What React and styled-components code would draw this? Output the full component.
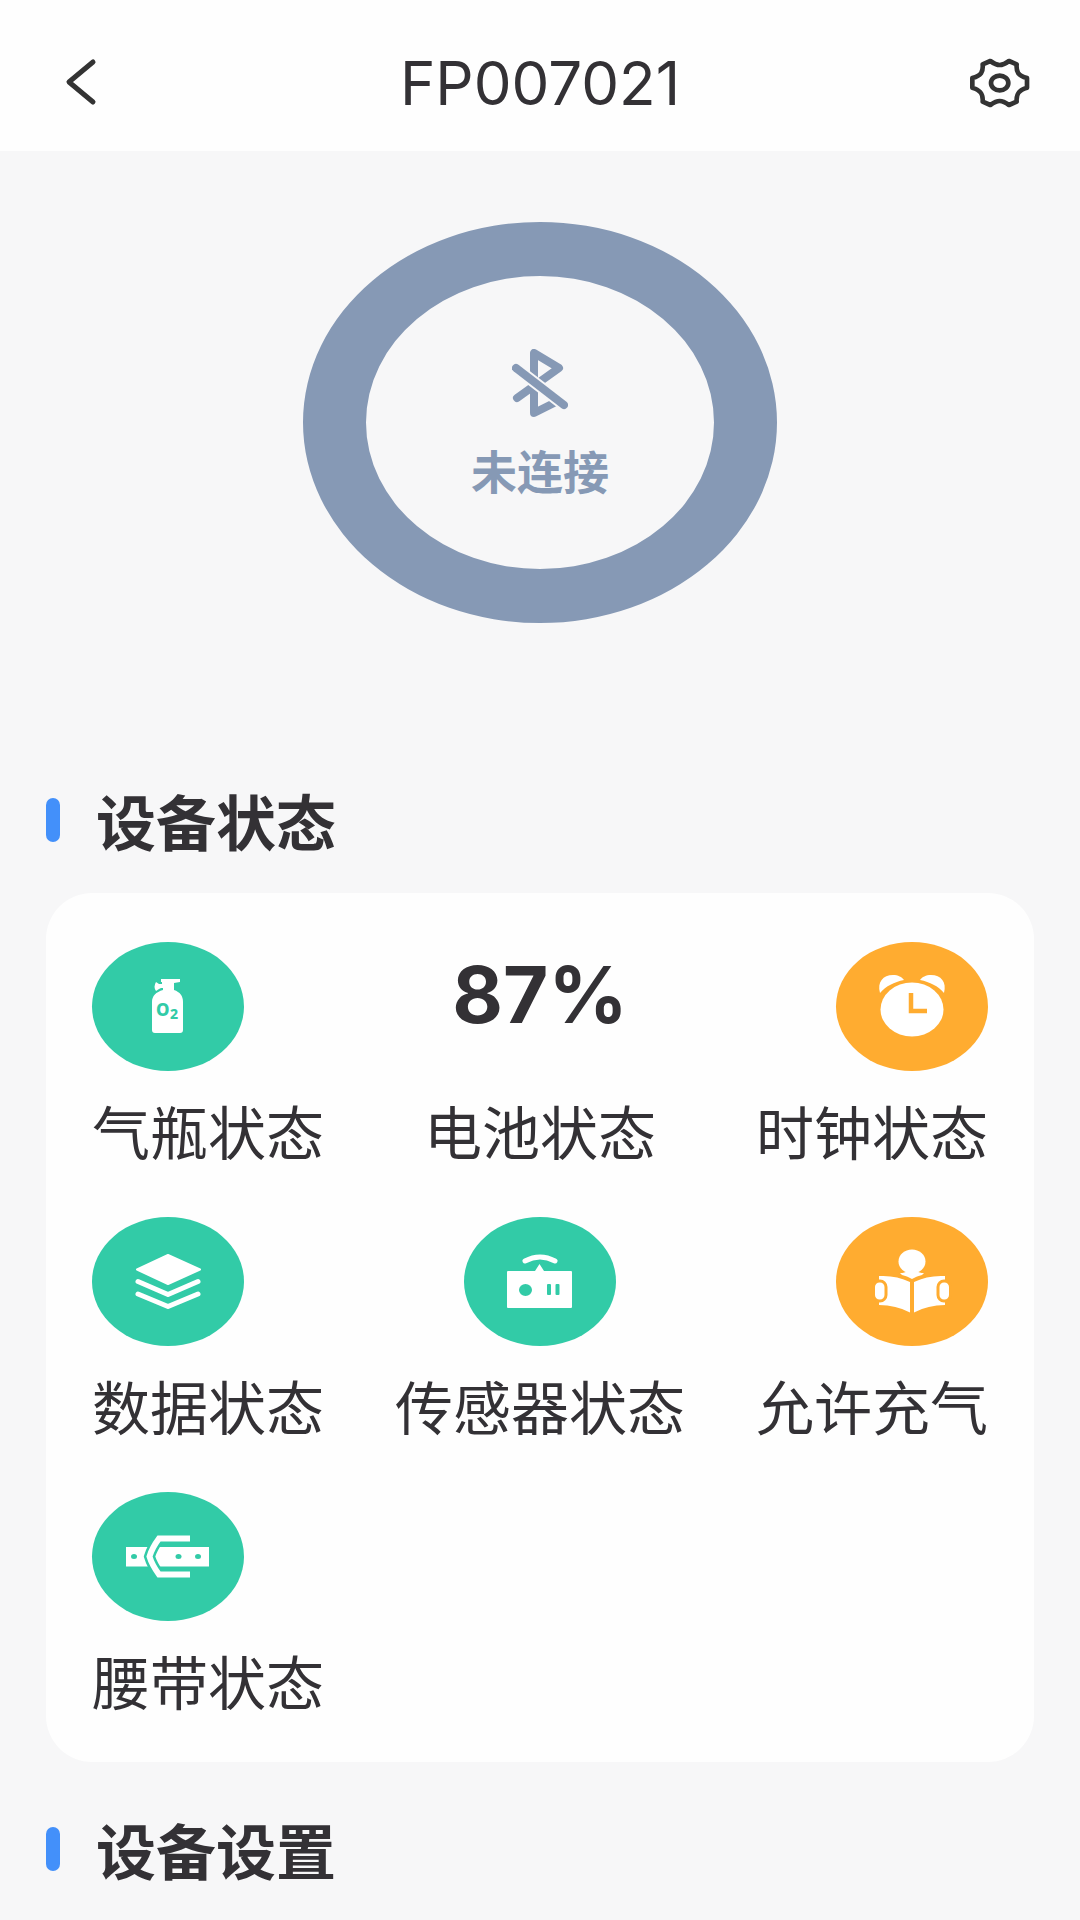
import React from "react";
import styled, { createGlobalStyle } from "styled-components";

const GlobalStyle = createGlobalStyle`
  * {
    box-sizing: border-box;
  }
  body {
    margin: 0;
    background: #f7f7f8;
    color: #333135;
    font-family: "Noto Sans", "Noto Sans CJK SC", sans-serif;
  }
`;

export default function App() {
  return (
    <>
      <GlobalStyle />
      <Header title="FP007021" />
      <Main>
        <Ring>
          <BluetoothOffIcon />
          <RingText>未连接</RingText>
        </Ring>
        <SectionTitle>设备状态</SectionTitle>
        <StatusCard>
          <Status label="气瓶状态" color="green" icon={<TankIcon />} />
          <Status label="电池状态" value="87%" />
          <Status label="时钟状态" color="orange" icon={<ClockIcon />} />
          <Status label="数据状态" color="green" icon={<LayersIcon />} />
          <Status label="传感器状态" color="green" icon={<SensorIcon />} />
          <Status label="允许充气" color="orange" icon={<ReaderIcon />} />
          <Status label="腰带状态" color="green" icon={<BeltIcon />} />
        </StatusCard>
        <SectionTitle>设备设置</SectionTitle>
      </Main>
    </>
  );
}

function Header({ title }) {
  return (
    <HeaderWrapper>
      <IconButton type="button" aria-label="返回">
        <svg width="66" height="54" viewBox="0 0 66 54" fill="none">
          <path
            d="M43 6L19 26L43 46"
            stroke="#333"
            strokeWidth="5"
            strokeLinecap="round"
            strokeLinejoin="round"
          />
        </svg>
      </IconButton>
      <h1>{title}</h1>
      <IconButton type="button" aria-label="设置">
        <svg width="66" height="54" viewBox="42 46 198 162" fill="none">
          <g stroke="#333" strokeWidth="14" strokeLinejoin="round">
            <path d="M121 61C132 69 138 73 149 73C160 73 166 69 177 61L200 71C198 94 204 104 231 112V141C206 148 198 160 200 183L177 193C166 185 160 181 149 181C138 181 132 185 121 193L98 183C100 160 92 148 67 141V112C94 104 100 94 98 71Z" />
            <ellipse cx="149" cy="127" rx="26" ry="22" />
          </g>
        </svg>
      </IconButton>
    </HeaderWrapper>
  );
}

const HeaderWrapper = styled.header`
  display: grid;
  grid-template-columns: 66px 1fr 66px;
  align-items: center;
  height: 151px;
  padding: 14px 50px 0;
  background: #fefefe;

  h1 {
    margin: 0;
    font-family: Inter, "Noto Sans", sans-serif;
    font-size: 60px;
    line-height: 70px;
    font-weight: 400;
    text-align: center;
  }
`;

const IconButton = styled.button`
  display: flex;
  padding: 0;
  border: 0;
  background: none;
  cursor: pointer;
`;

const Main = styled.main`
  display: flex;
  flex-direction: column;
  padding: 71px 46px 40px;
`;

const Ring = styled.div`
  display: flex;
  flex-direction: column;
  align-items: center;
  align-self: center;
  gap: 29px;
  width: 474px;
  height: 401px;
  margin-bottom: 170px;
  padding-top: 73px;
  border: solid #8699b5;
  border-width: 54px 63px;
  border-radius: 50%;
  color: #8699b5;
`;

const RingText = styled.span`
  font-size: 46px;
  line-height: 50px;
  font-weight: 700;
`;

const SectionTitle = styled.h2`
  display: flex;
  align-items: center;
  gap: 36px;
  margin: 0;
  font-size: 60px;
  line-height: 60px;
  font-weight: 700;

  &::before {
    content: "";
    width: 14px;
    height: 44px;
    margin-bottom: 6px;
    border-radius: 7px;
    background: #4390fa;
  }
`;

const StatusCard = styled.ul`
  display: grid;
  grid-template-columns: repeat(3, 1fr);
  row-gap: 49px;
  margin: 40px 0 60px;
  padding: 49px 46px 44px;
  border-radius: 46px;
  background: #fefefe;
  list-style: none;
`;

function Status({ label, value, color, icon }) {
  return (
    <StatusWrapper>
      {icon ? <Badge $color={color}>{icon}</Badge> : <Value>{value}</Value>}
      <span>{label}</span>
    </StatusWrapper>
  );
}

const StatusWrapper = styled.li`
  display: flex;
  flex-direction: column;
  align-items: center;
  gap: 27px;
  font-size: 58px;
  line-height: 70px;
  white-space: nowrap;

  &:nth-child(3n + 1) {
    align-items: flex-start;
  }
  &:nth-child(3n) {
    align-items: flex-end;
  }
`;

const badgeColors = {
  green: "#32cba7",
  orange: "#ffac30",
};

const Badge = styled.div`
  width: 152px;
  height: 129px;
  border-radius: 50%;
  color: ${({ $color }) => badgeColors[$color]};
  background: currentColor;

  svg {
    display: block;
  }
`;

const Value = styled.strong`
  height: 129px;
  font-family: Inter, "Noto Sans", sans-serif;
  font-size: 78px;
  line-height: 106px;
  font-weight: 700;
`;

function BadgeIcon({ children }) {
  return (
    <svg width="152" height="129" viewBox="0 0 152 129" fill="#fff" aria-hidden="true">
      {children}
    </svg>
  );
}

function TankIcon() {
  return (
    <BadgeIcon>
      <path d="M69 37H88V40L82 41V48C88 50 91 54 91 60V88Q91 91 88 91H63Q60 91 60 88V60C60 54 64 50 71 48V46H69L67 47L64 49Q61 45 64 40L67 42H70V40H69Z" />
      <g fill="currentColor" fontWeight="800">
        <text x="64" y="74" fontSize="17">O</text>
        <text x="78" y="77" fontSize="14">2</text>
      </g>
    </BadgeIcon>
  );
}

function ClockIcon() {
  return (
    <BadgeIcon>
      <path d="M44 51C41 40 47 33 57 33C62 33 66 35 68 38C58 40 50 44 44 51Z" />
      <path d="M108 51C111 40 105 33 95 33C90 33 86 35 84 38C94 40 102 44 108 51Z" />
      <ellipse cx="76" cy="67.500" rx="31.500" ry="27" />
      <path d="M75 51V69H91" fill="none" stroke="currentColor" strokeWidth="4.500" />
    </BadgeIcon>
  );
}

function LayersIcon() {
  return (
    <BadgeIcon>
      <g stroke="#fff" strokeLinecap="round" strokeLinejoin="round">
        <path d="M76 38L108 52.500L76 67L45 52.500Z" strokeWidth="2" />
        <path d="M46 64.500L76 77.500L106 64.500M46 77L76 89.500L106 77" fill="none" strokeWidth="5" />
      </g>
    </BadgeIcon>
  );
}

function SensorIcon() {
  return (
    <BadgeIcon>
      <path d="M44 54H71L75.500 47L80 54H107Q108 54 108 55V90Q108 91 107 91H44Q43 91 43 90V55Q43 54 44 54Z" />
      <path d="M61 44Q76 36 91 44" fill="none" stroke="#fff" strokeWidth="5" strokeLinecap="round" />
      <g fill="currentColor">
        <ellipse cx="61.500" cy="73" rx="6.500" ry="6" />
        <rect x="83" y="67" width="4" height="11" rx="1" />
        <rect x="91.500" y="67" width="4" height="11" rx="1" />
      </g>
    </BadgeIcon>
  );
}

function ReaderIcon() {
  return (
    <BadgeIcon>
      <ellipse cx="76" cy="44.500" rx="13.500" ry="12" />
      <path d="M71 54H81Q83 56 88 56L86 58Q81 59 76 62Q71 59 66 58L64 56Q69 56 71 54Z" />
      <path d="M43 59Q60 58 74 65V95.500Q60 88 43 88Z" />
      <path d="M109 59Q92 58 78 65V95.500Q92 88 109 88Z" />
      <g stroke="currentColor" strokeWidth="3">
        <rect x="37.500" y="64" width="12.500" height="20" rx="6" />
        <rect x="102" y="64" width="12.500" height="20" rx="6" />
      </g>
    </BadgeIcon>
  );
}

function BeltIcon() {
  const buckle = "M98 46.500H67Q60 56 57.500 64.500Q60 73 67 82.500H98";
  return (
    <BadgeIcon>
      <rect x="34" y="55" width="83" height="19.500" />
      <path d={buckle} fill="none" stroke="currentColor" strokeWidth="11" />
      <path d={buckle} fill="none" stroke="#fff" strokeWidth="6" />
      <g fill="currentColor">
        <ellipse cx="42" cy="64.500" rx="3" ry="2.500" />
        <ellipse cx="86.500" cy="64.500" rx="3" ry="2.500" />
        <ellipse cx="106" cy="64.500" rx="3" ry="2.500" />
      </g>
    </BadgeIcon>
  );
}

function BluetoothOffIcon() {
  return (
    <svg width="56" height="68" viewBox="0 0 56 68" fill="none" aria-hidden="true">
      <g strokeWidth="8" strokeLinecap="round" strokeLinejoin="round">
        <path d="M5 49L47 19L22 4V64L44 53" stroke="currentColor" />
        <path d="M4 19L52 56" stroke="#f7f7f8" strokeWidth="12" />
        <path d="M4 19L52 56" stroke="currentColor" />
      </g>
    </svg>
  );
}
